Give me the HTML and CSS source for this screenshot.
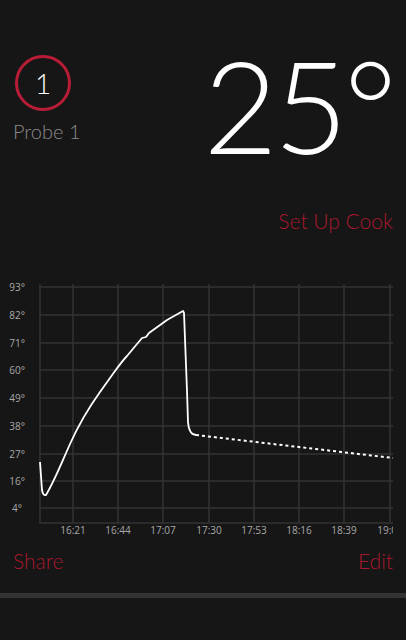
FILE: index.html
```html
<!DOCTYPE html>
<html lang="en">
<head>
  <meta charset="UTF-8" />
  <title>Probe 1</title>
  <link rel="stylesheet" href="styles.css">
</head>
<body>
  <div class="screen">
    <div class="top">
      <div class="probe">
        <div class="ring">1</div>
        <div class="probe-name">Probe 1</div>
      </div>
      <div class="temp">25°</div>
    </div>
    <div class="setup">Set Up Cook</div>

    <svg class="chart" width="406" height="260" viewBox="0 280 406 260">
      <defs>
        <clipPath id="plot-clip"><rect x="0" y="280" width="393" height="260" /></clipPath>
      </defs>
      <g class="grid">
        <line x1="39" y1="286" x2="393" y2="286" />
        <line x1="39" y1="314" x2="393" y2="314" />
        <line x1="39" y1="342" x2="393" y2="342" />
        <line x1="39" y1="369" x2="393" y2="369" />
        <line x1="39" y1="397" x2="393" y2="397" />
        <line x1="39" y1="425" x2="393" y2="425" />
        <line x1="39" y1="453" x2="393" y2="453" />
        <line x1="39" y1="480" x2="393" y2="480" />
        <line x1="39" y1="507" x2="393" y2="507" />
        <line x1="39" y1="522" x2="393" y2="522" />
        <line x1="40" y1="283" x2="40" y2="522" />
        <line x1="73" y1="283" x2="73" y2="522" />
        <line x1="118" y1="283" x2="118" y2="522" />
        <line x1="163" y1="283" x2="163" y2="522" />
        <line x1="209" y1="283" x2="209" y2="522" />
        <line x1="254" y1="283" x2="254" y2="522" />
        <line x1="299" y1="283" x2="299" y2="522" />
        <line x1="344" y1="283" x2="344" y2="522" />
        <line x1="390" y1="283" x2="390" y2="522" />
      </g>
      <g class="ylab">
        <text x="25" y="290">93°</text>
        <text x="25" y="318">82°</text>
        <text x="25" y="346">71°</text>
        <text x="25" y="373">60°</text>
        <text x="25" y="401">49°</text>
        <text x="25" y="429">38°</text>
        <text x="25" y="457">27°</text>
        <text x="25" y="484">16°</text>
        <text x="22" y="511">4°</text>
      </g>
      <g class="xlab" clip-path="url(#plot-clip)">
        <text x="73" y="533">16:21</text>
        <text x="118" y="533">16:44</text>
        <text x="163" y="533">17:07</text>
        <text x="209" y="533">17:30</text>
        <text x="254" y="533">17:53</text>
        <text x="299" y="533">18:16</text>
        <text x="344" y="533">18:39</text>
        <text x="390" y="533">19:00</text>
      </g>
      <path class="curve" d="M40,461 L42,489 Q43,495 46,494 C54,481 62,461 70,443 S90,405 100,391 L110,377 C118,366 122,360 127,355 L142,337 L146,336 L149,332 L167,319 L183,310 L184,312 L187,390 L188,421 Q189,434 196,434" />
      <path class="forecast" d="M196,434 L393,457" />
    </svg>

    <div class="actions">
      <span>Share</span>
      <span>Edit</span>
    </div>
    <div class="rule"></div>
  </div>
</body>
</html>
```

FILE: styles.css
```css
html, body {
  margin: 0;
  background-color: #161616;
}
body {
  font-family: Lato, 'Open Sans', sans-serif;
  width: 406px;
  height: 640px;
  overflow: hidden;
}
.screen {
  display: flex;
  flex-direction: column;
}
.top {
  display: flex;
  justify-content: space-between;
  padding: 55px 13px 0 15px;
}
.probe {
  display: flex;
  flex-direction: column;
  align-items: flex-start;
}
.ring {
  width: 50px;
  height: 50px;
  border: 3px solid #b81d36;
  border-radius: 50%;
  color: #fff;
  font-size: 28px;
  font-weight: 300;
  display: flex;
  align-items: center;
  justify-content: center;
}
.probe-name {
  margin-top: 8px;
  margin-left: -2px;
  color: #8a8a8a;
  font-size: 20px;
  font-weight: 300;
}
.temp {
  color: #fff;
  font-size: 128px;
  font-weight: 300;
  line-height: 1;
  margin-top: -14px;
  letter-spacing: -4px;
}
.setup {
  align-self: flex-end;
  margin: 39px 13px 0 0;
  color: #a8182e;
  font-size: 21px;
  font-weight: 300;
}
.chart {
  display: block;
  margin-top: 48px;
}
.grid line {
  stroke: #333;
  stroke-width: 1.5;
}
.ylab text, .xlab text {
  fill: #a8a8a8;
  font-size: 10px;
  font-family: 'Open Sans', sans-serif;
}
.ylab text { text-anchor: end; }
.xlab text { text-anchor: middle; }
.curve {
  fill: none;
  stroke: #fff;
  stroke-width: 1.8;
  stroke-linejoin: round;
}
.forecast {
  fill: none;
  stroke: #fff;
  stroke-width: 2;
  stroke-dasharray: 3 3;
}
.actions {
  display: flex;
  justify-content: space-between;
  padding: 7px 13px 0 13px;
  color: #a8182e;
  font-size: 21px;
  font-weight: 300;
}
.rule {
  margin-top: 20px;
  height: 5px;
  background-color: #333;
}
```
